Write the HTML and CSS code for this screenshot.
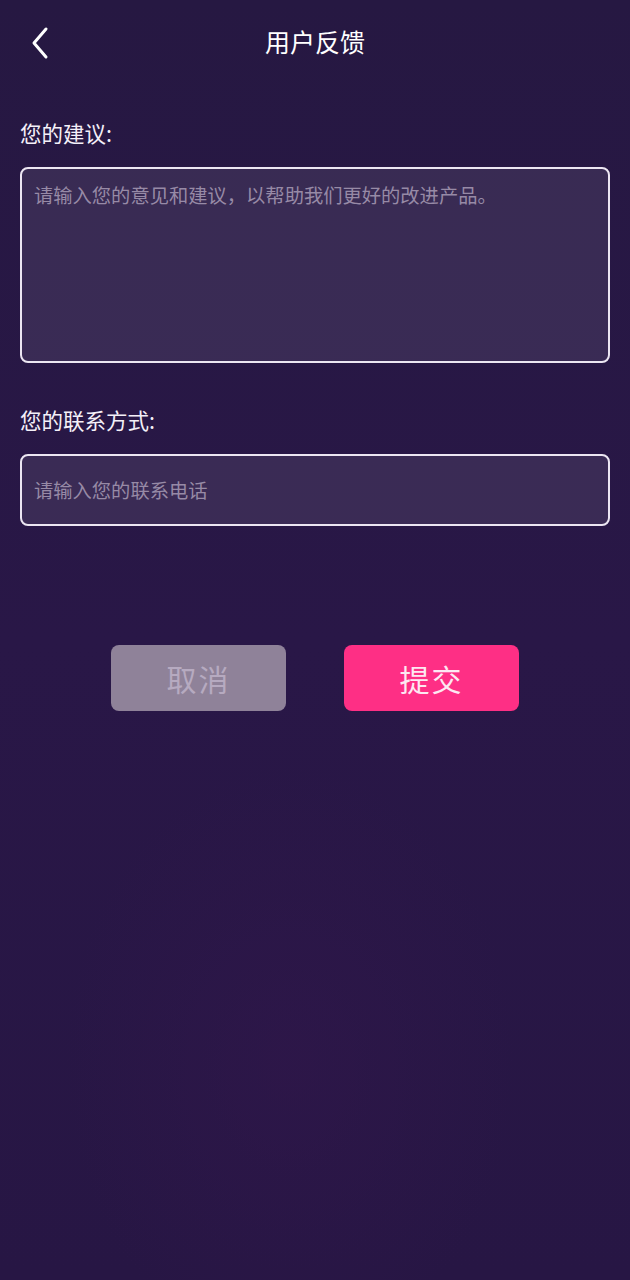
FILE: index.html
```html
<!DOCTYPE html>
<html lang="zh">
<head>
<meta charset="utf-8">
<title>用户反馈</title>
<link rel="stylesheet" href="styles.css">
</head>
<body>
<div class="page">
  <header class="nav">
    <button class="back" aria-label="返回">
      <svg width="24" height="34" viewBox="0 0 24 34"><path d="M19 3 L7 17 L19 31" fill="none" stroke="#ffffff" stroke-width="3" stroke-linecap="round" stroke-linejoin="round"/></svg>
    </button>
    <h1 class="title">用户反馈</h1>
  </header>

  <main class="form">
    <section class="field">
      <label class="label">您的建议:</label>
      <div class="box box-area"><span class="ph">请输入您的意见和建议，以帮助我们更好的改进产品。</span></div>
    </section>
    <section class="field field-contact">
      <label class="label">您的联系方式:</label>
      <div class="box box-input"><span class="ph">请输入您的联系电话</span></div>
    </section>
    <div class="actions">
      <button class="btn btn-cancel">取消</button>
      <button class="btn btn-submit">提交</button>
    </div>
  </main>
</div>
</body>
</html>
```

FILE: styles.css
```css
* { box-sizing: border-box; }
html, body { margin: 0; padding: 0; }
body {
  width: 630px;
  height: 1280px;
  font-family: "Noto Sans CJK SC", "Noto Sans", sans-serif;
  color: #ffffff;
  background:
    radial-gradient(ellipse 320px 420px at 290px 1060px, rgba(50, 22, 76, 0.5), rgba(40, 23, 70, 0) 70%),
    linear-gradient(180deg, #261842 0%, #291747 50%, #271644 100%);
  overflow: hidden;
}
.page { width: 630px; height: 1280px; }

.nav {
  position: relative;
  height: 84px;
  display: flex;
  align-items: center;
  justify-content: center;
}
.back {
  position: absolute;
  left: 24px;
  top: 25px;
  width: 30px;
  height: 36px;
  padding: 0;
  border: 0;
  background: none;
  display: flex;
  align-items: center;
  justify-content: center;
}
.title {
  margin: 0;
  font-size: 25px;
  font-weight: 400;
  line-height: 1;
  color: #ffffff;
  transform: translateY(-1px);
}

.form { padding: 0 20px; }
.field { display: flex; flex-direction: column; padding-top: 35px; }
.field-contact { padding-top: 43px; }
.label {
  font-size: 21.5px;
  line-height: 28px;
  color: #f4f0f8;
  margin-bottom: 20px;
}
.box {
  border: 2px solid #ece6f2;
  border-radius: 8px;
  background: rgba(255, 255, 255, 0.085);
  padding: 0 12px;
}
.box-area { height: 196px; padding-top: 14px; }
.box-input { height: 72px; display: flex; align-items: center; }
.ph {
  font-size: 19.3px;
  line-height: 24px;
  color: #978aa6;
}

.actions {
  display: flex;
  justify-content: center;
  gap: 58px;
  padding-top: 119px;
}
.btn {
  width: 175px;
  height: 66px;
  border: 0;
  border-radius: 8px;
  font-family: "Noto Sans CJK SC", "Noto Sans", sans-serif;
  font-size: 30px;
  letter-spacing: 2px;
  line-height: 1;
}
.btn-cancel { background: #8f8299; color: #b6aac0; }
.btn-submit { background: #fe2f85; color: #fde8f2; }
```
